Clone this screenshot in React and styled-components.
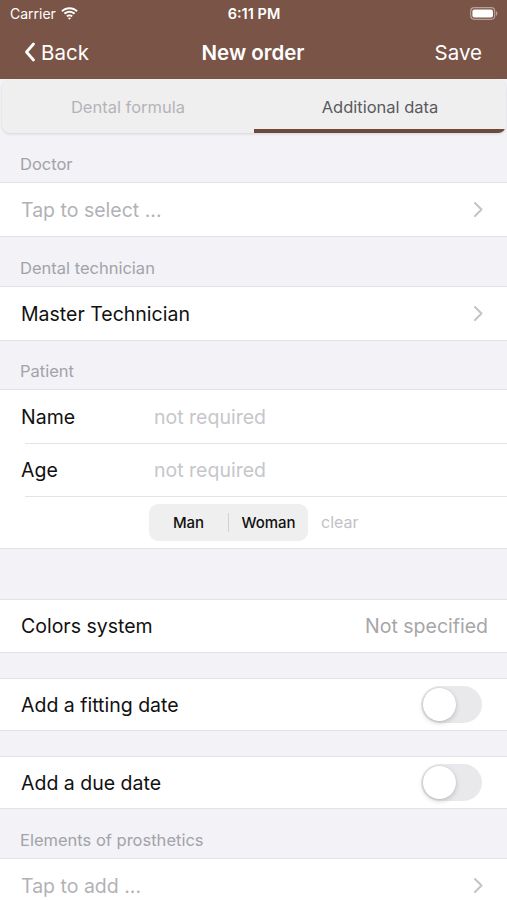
import React from "react";
import styled, { createGlobalStyle } from "styled-components";

const Global = createGlobalStyle`
  html, body { margin: 0; padding: 0; background: #f2f2f7; }
  body { font-family: Inter, "Noto Sans", sans-serif; -webkit-font-smoothing: antialiased; }
  * { box-sizing: border-box; }
`;

const BROWN = "#7a5446";

const Screen = styled.div`
  width: 507px;
  height: 900px;
  overflow: hidden;
  background: #f2f2f7;
`;

const Header = styled.header`
  background: ${BROWN};
  color: #fff;
  height: 79px;
  display: flex;
  flex-direction: column;
`;

const StatusBar = styled.div`
  height: 25px;
  display: grid;
  grid-template-columns: 1fr auto 1fr;
  align-items: center;
  padding: 2px 9px 0 10px;
  font-size: 14px;
`;

const Carrier = styled.div`
  display: flex;
  align-items: center;
  gap: 5px;
  font-weight: 400;
`;

const Time = styled.div`
  font-weight: 600;
  font-size: 14.5px;
`;

const Battery = styled.div`
  justify-self: end;
  display: flex;
  align-items: center;
`;

const NavBar = styled.div`
  flex: 1;
  display: grid;
  grid-template-columns: 1fr auto 1fr;
  align-items: center;
  padding: 0 25px 0 24px;
  font-size: 20.5px;
`;

const BackButton = styled.div`
  display: flex;
  align-items: center;
  gap: 5px;
`;

const Title = styled.div`
  font-weight: 600;
`;

const SaveButton = styled.div`
  justify-self: end;
`;

const TabBar = styled.div`
  margin: 1px 1px 0 2px;
  height: 53px;
  background: #efefef;
  border-radius: 8px;
  box-shadow: 0 1px 3px rgba(0, 0, 0, 0.12);
  display: flex;
  overflow: hidden;
`;

const Tab = styled.div`
  flex: 1;
  display: flex;
  align-items: center;
  justify-content: center;
  padding-top: 4px;
  font-size: 16.5px;
  color: ${(p) => (p.$active ? "#5a5a5e" : "#b4b4b8")};
  border-bottom: 4px solid ${(p) => (p.$active ? "#6e4a3d" : "transparent")};
`;

const SectionHeader = styled.div`
  height: ${(p) => p.$h || 49}px;
  display: flex;
  align-items: flex-end;
  padding: 0 20px 8px;
  font-size: 16.5px;
  color: #a3a3a8;
`;

const Spacer = styled.div`
  height: ${(p) => p.$h}px;
`;

const Group = styled.div`
  background: #fff;
  border-top: 1px solid #e2e2e6;
  border-bottom: 1px solid #e2e2e6;
`;

const Row = styled.div`
  height: ${(p) => p.$h || 53}px;
  display: flex;
  align-items: center;
  padding: 0 24px 0 21px;
  font-size: 19.5px;
  color: ${(p) => (p.$placeholder ? "#b2b2b6" : "#111")};
  position: relative;
  ${(p) =>
    p.$divider &&
    `
    &::before {
      content: "";
      position: absolute;
      top: 0;
      left: 25px;
      right: 0;
      height: 1px;
      background: #e4e4e8;
    }
  `}
`;

const RowText = styled.div`
  flex: 1;
`;

const FieldLabel = styled.div`
  width: 133px;
`;

const FieldInput = styled.div`
  color: #c6c6ca;
`;

const Detail = styled.div`
  color: #a6a6aa;
  margin-right: -5px;
`;

const SegmentRow = styled.div`
  height: 52px;
  display: flex;
  align-items: center;
  padding-left: 149px;
  gap: 13px;
  position: relative;
  &::before {
    content: "";
    position: absolute;
    top: 0;
    left: 25px;
    right: 0;
    height: 1px;
    background: #e4e4e8;
  }
`;

const Segmented = styled.div`
  width: 159px;
  height: 37px;
  background: #efeff0;
  border-radius: 9px;
  display: flex;
  align-items: center;
`;

const Segment = styled.div`
  flex: 1;
  text-align: center;
  font-size: 15px;
  font-weight: 500;
  color: #111;
  & + & {
    border-left: 1px solid #d2d2d6;
  }
`;

const ClearLink = styled.div`
  font-size: 16px;
  color: #c2c2c6;
`;

const Toggle = styled.div`
  width: 61px;
  height: 37px;
  border-radius: 19px;
  background: #e9e9eb;
  position: relative;
  margin-right: 1px;
`;

const Knob = styled.div`
  position: absolute;
  top: 2px;
  left: 2px;
  width: 33px;
  height: 33px;
  border-radius: 50%;
  background: #fff;
  box-shadow: 0 2px 5px rgba(0, 0, 0, 0.18), 0 0 0 0.5px rgba(0, 0, 0, 0.06);
`;

const Chevron = () => (
  <svg width="10" height="17" viewBox="0 0 10 17" fill="none">
    <path d="M2 2l6.5 6.5L2 15" stroke="#c4c4c8" strokeWidth="2" strokeLinecap="round" strokeLinejoin="round" />
  </svg>
);

const Wifi = () => (
  <svg width="17" height="13" viewBox="0 0 17 13">
    <path d="M8.5 2.2c2.7 0 5.1 1 6.9 2.7l1.3-1.4C14.5 1.4 11.6.2 8.5.2S2.5 1.4.3 3.5l1.3 1.4C3.4 3.2 5.8 2.2 8.5 2.2z" fill="#fff" />
    <path d="M8.5 5.8c1.7 0 3.2.6 4.4 1.7l1.3-1.4C12.7 4.7 10.7 3.8 8.5 3.8S4.3 4.7 2.8 6.1l1.3 1.4c1.2-1.1 2.7-1.700 4.4-1.7z" fill="#fff" />
    <path d="M8.5 9.3c.8 0 1.5.3 2 .8l1.3-1.4c-.9-.8-2-1.3-3.3-1.3s-2.4.5-3.3 1.3l1.3 1.4c.5-.5 1.2-.8 2-.8zM8.5 12.8l1.6-1.7c-.4-.4-1-.6-1.6-.6s-1.2.2-1.6.6z" fill="#fff" />
  </svg>
);

const BatteryIcon = () => (
  <svg width="28" height="13" viewBox="0 0 28 13">
    <rect x="0.7" y="0.7" width="24" height="11.6" rx="3.5" fill="none" stroke="rgba(255,255,255,0.45)" strokeWidth="1.2" />
    <rect x="2.4" y="2.4" width="20.6" height="8.2" rx="2" fill="#fff" />
    <path d="M26 4.3c.9.3 1.4 1.1 1.4 2.2s-.5 1.9-1.4 2.2z" fill="rgba(255,255,255,0.45)" />
  </svg>
);

const BackChevron = () => (
  <svg width="12" height="20" viewBox="0 0 12 20" fill="none">
    <path d="M9.5 2L2.5 10l7 8" stroke="#fff" strokeWidth="2.8" strokeLinecap="round" strokeLinejoin="round" />
  </svg>
);

export default function App() {
  return (
    <Screen>
      <Global />
      <Header>
        <StatusBar>
          <Carrier>
            Carrier <Wifi />
          </Carrier>
          <Time>6:11 PM</Time>
          <Battery>
            <BatteryIcon />
          </Battery>
        </StatusBar>
        <NavBar>
          <BackButton>
            <BackChevron />
            Back
          </BackButton>
          <Title>New order</Title>
          <SaveButton>Save</SaveButton>
        </NavBar>
      </Header>

      <TabBar>
        <Tab>Dental formula</Tab>
        <Tab $active>Additional data</Tab>
      </TabBar>

      <SectionHeader>Doctor</SectionHeader>
      <Group>
        <Row $placeholder>
          <RowText>Tap to select ...</RowText>
          <Chevron />
        </Row>
      </Group>

      <SectionHeader>Dental technician</SectionHeader>
      <Group>
        <Row>
          <RowText>Master Technician</RowText>
          <Chevron />
        </Row>
      </Group>

      <SectionHeader $h={48}>Patient</SectionHeader>
      <Group>
        <Row>
          <FieldLabel>Name</FieldLabel>
          <FieldInput>not required</FieldInput>
        </Row>
        <Row $divider>
          <FieldLabel>Age</FieldLabel>
          <FieldInput>not required</FieldInput>
        </Row>
        <SegmentRow>
          <Segmented>
            <Segment>Man</Segment>
            <Segment>Woman</Segment>
          </Segmented>
          <ClearLink>clear</ClearLink>
        </SegmentRow>
      </Group>

      <Spacer $h={50} />
      <Group>
        <Row $h={52}>
          <RowText>Colors system</RowText>
          <Detail>Not specified</Detail>
        </Row>
      </Group>

      <Spacer $h={25} />
      <Group>
        <Row $h={51}>
          <RowText>Add a fitting date</RowText>
          <Toggle>
            <Knob />
          </Toggle>
        </Row>
      </Group>

      <Spacer $h={25} />
      <Group>
        <Row $h={51}>
          <RowText>Add a due date</RowText>
          <Toggle>
            <Knob />
          </Toggle>
        </Row>
      </Group>

      <SectionHeader>Elements of prosthetics</SectionHeader>
      <Group>
        <Row $placeholder>
          <RowText>Tap to add ...</RowText>
          <Chevron />
        </Row>
      </Group>
    </Screen>
  );
}
